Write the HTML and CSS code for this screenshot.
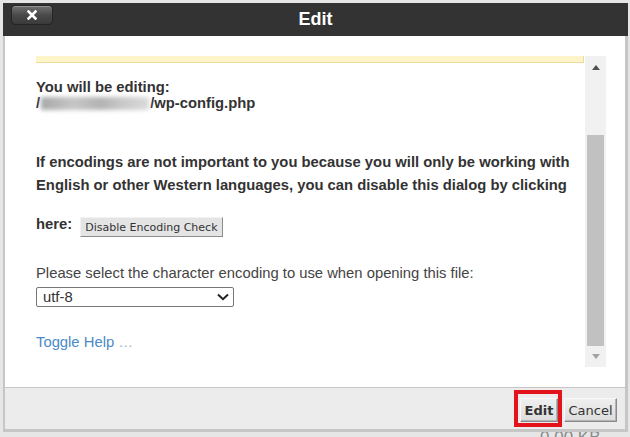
FILE: index.html
```html
<!DOCTYPE html>
<html lang="en">
<head>
<meta charset="utf-8">
<title>Edit</title>
<link rel="stylesheet" href="styles.css">
</head>
<body>
<div class="dialog">
  <div class="titlebar">
    <button class="close" type="button" aria-label="Close">
      <svg width="10" height="10" viewBox="0 0 10 10"><path d="M1.5 1.5L8.5 8.5M8.5 1.5L1.5 8.5" stroke="#fff" stroke-width="2.6" stroke-linecap="square"/></svg>
    </button>
    <h1 class="title">Edit</h1>
    <span></span>
  </div>
  <div class="dialog-body">
    <div class="scroll">
      <div class="scroll-content">
        <div class="notice-bar"></div>
        <p class="editing">You will be editing:<br>/<span class="redact"></span>/wp-config.php</p>
        <p class="notice">If encodings are not important to you because you will only be working with English or other Western languages, you can disable this dialog by clicking</p>
        <div class="here-row"><span>here:</span><button class="btn-small" type="button">Disable Encoding Check</button></div>
        <p class="label">Please select the character encoding to use when opening this file:</p>
        <div class="select"><span>utf-8</span><svg width="12" height="8" viewBox="0 0 12 8"><path d="M1 1.5L6 6.2L11 1.5" fill="none" stroke="#222" stroke-width="2"/></svg></div>
        <a class="toggle" href="#">Toggle Help <span class="dots">…</span></a>
      </div>
      <div class="scrollbar">
        <span class="arrow-up"></span>
        <span class="thumb"></span>
        <span class="arrow-down"></span>
      </div>
    </div>
  </div>
  <div class="footer">
    <span class="highlight"><button class="btn btn-edit" type="button">Edit</button></span>
    <button class="btn btn-cancel" type="button">Cancel</button>
  </div>
</div>
<div class="bg-row">0.00 KB</div>
</body>
</html>
```
FILE: styles.css
```css
* { box-sizing: border-box; }
html, body { margin: 0; }
body {
  background: #e6e6e6;
  width: 630px;
  height: 437px;
  overflow: hidden;
  font-family: "Liberation Sans", Arial, sans-serif;
  color: #333;
}
.dialog {
  position: relative;
  width: 625px;
  margin: 3px 0 0 3px;
}
.titlebar {
  height: 33px;
  background: #333;
  display: grid;
  grid-template-columns: 1fr auto 1fr;
  align-items: start;
}
.close {
  margin: 2px 0 0 8px;
  width: 42px;
  height: 20px;
  padding: 0;
  border-radius: 4px;
  border: 1px solid #242424;
  background: linear-gradient(#727272, #4a4a4a 50%, #3a3a3a);
  box-shadow: inset 0 1px 0 rgba(255,255,255,0.25);
  display: flex;
  align-items: center;
  justify-content: center;
}
.title {
  margin: 0;
  font-size: 18px;
  font-weight: bold;
  color: #fff;
  line-height: 32px;
}
.dialog-body {
  height: 351px;
  background: #fff;
  border-left: 2px solid #c6c6c6;
  border-right: 3px solid #c6c6c6;
  padding: 20px 19px 0 31px;
}
.scroll {
  display: flex;
  gap: 1px;
  height: 311px;
}
.scroll-content {
  width: 548px;
  overflow: hidden;
}
.notice-bar {
  height: 7px;
  background: #fdf4c9;
  border-bottom: 1px solid #eedd9c;
  border-right: 1px solid #eedd9c;
}
.editing {
  margin: 16px 0 0;
  font-weight: bold;
  font-size: 14.8px;
  line-height: 16px;
}
.redact {
  display: inline-block;
  width: 108px;
  height: 13px;
  margin: 0 1px;
  vertical-align: -2px;
  background: linear-gradient(90deg, #a8a8a8, #c6c6c6 30%, #b3b3b3 55%, #c9c9c9 75%, #dadada);
  filter: blur(2px);
}
.notice {
  margin: 40px 0 0;
  font-weight: bold;
  font-size: 14.8px;
  line-height: 23px;
}
.here-row {
  display: flex;
  align-items: flex-start;
  margin-top: 16px;
  font-weight: bold;
  font-size: 14.8px;
  line-height: 23px;
}
.btn-small {
  margin: 4px 0 0 8px;
  height: 20px;
  padding: 0 4px;
  font: 11px "DejaVu Sans", Verdana, sans-serif;
  color: #333;
  background: #e4e4e4;
  border: 1px solid;
  border-color: #f2f2f2 #8c8c8c #8c8c8c #f2f2f2;
}
.label {
  margin: 28px 0 0;
  font-size: 14.8px;
  line-height: 16px;
  color: #444;
}
.select {
  margin-top: 6px;
  width: 198px;
  height: 20px;
  border: 1px solid #777;
  border-radius: 2px;
  display: flex;
  align-items: center;
  justify-content: space-between;
  padding: 0 4px 0 6px;
  font-size: 14.8px;
  color: #333;
}
.toggle {
  display: block;
  margin-top: 27px;
  font-size: 14.8px;
  line-height: 16px;
  color: #4a8ac6;
  text-decoration: none;
}
.dots { color: #8fb4d8; }
.scrollbar {
  width: 21px;
  background: #f1f1f1;
  display: flex;
  flex-direction: column;
  align-items: center;
}
.arrow-up {
  margin-top: 9px;
  width: 0;
  height: 0;
  border-left: 4.5px solid transparent;
  border-right: 4.5px solid transparent;
  border-bottom: 5px solid #505050;
}
.thumb {
  margin-top: 65px;
  width: 17px;
  height: 211px;
  background: #c1c1c1;
}
.arrow-down {
  margin-top: 8px;
  width: 0;
  height: 0;
  border-left: 4.5px solid transparent;
  border-right: 4.5px solid transparent;
  border-top: 5px solid #a3a3a3;
}
.footer {
  height: 45px;
  background: #ececec;
  border: solid #c6c6c6;
  border-width: 1px 3px 3px 2px;
  display: flex;
  justify-content: flex-end;
  align-items: flex-start;
  padding: 2px 8px 0 0;
}
.highlight {
  display: block;
  border: 4px solid #e3121b;
  padding: 4px 0 1px 2px;
}
.btn {
  display: block;
  height: 24px;
  padding: 0;
  font: 13px "DejaVu Sans", Verdana, sans-serif;
  color: #333;
  background: linear-gradient(#efefef, #dcdcdc);
  border: 1px solid;
  border-color: #f8f8f8 #8a8a8a #8a8a8a #f8f8f8;
  box-shadow: inset -1px -1px 0 #b4b4b4;
}
.btn-edit {
  width: 38px;
  font-weight: bold;
}
.btn-cancel {
  width: 53px;
  margin: 8px 0 0 2px;
}
.bg-row {
  margin-top: -3px;
  padding-left: 540px;
  font-size: 17px;
  line-height: 17px;
  color: #8a8a8a;
}
```
